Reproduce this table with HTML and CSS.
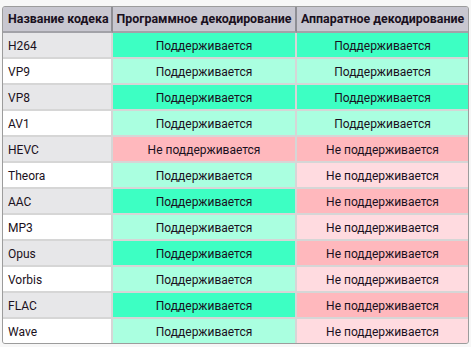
FILE: index.html
```html
<!DOCTYPE html>
<html lang="ru">
<head>
<meta charset="utf-8">
<link rel="stylesheet" href="styles.css">
</head>
<body>
<div class="frame">
<table class="codecs">
  <thead>
    <tr>
      <th class="name">Название кодека</th>
      <th class="c2">Программное декодирование</th>
      <th class="c3">Аппаратное декодирование</th>
    </tr>
  </thead>
  <tbody>
    <tr class="odd"><td class="name">H264</td><td class="yes">Поддерживается</td><td class="yes">Поддерживается</td></tr>
    <tr class="even"><td class="name">VP9</td><td class="yes">Поддерживается</td><td class="yes">Поддерживается</td></tr>
    <tr class="odd"><td class="name">VP8</td><td class="yes">Поддерживается</td><td class="yes">Поддерживается</td></tr>
    <tr class="even"><td class="name">AV1</td><td class="yes">Поддерживается</td><td class="yes">Поддерживается</td></tr>
    <tr class="odd"><td class="name">HEVC</td><td class="no">Не поддерживается</td><td class="no">Не поддерживается</td></tr>
    <tr class="even"><td class="name">Theora</td><td class="yes">Поддерживается</td><td class="no">Не поддерживается</td></tr>
    <tr class="odd"><td class="name">AAC</td><td class="yes">Поддерживается</td><td class="no">Не поддерживается</td></tr>
    <tr class="even"><td class="name">MP3</td><td class="yes">Поддерживается</td><td class="no">Не поддерживается</td></tr>
    <tr class="odd"><td class="name">Opus</td><td class="yes">Поддерживается</td><td class="no">Не поддерживается</td></tr>
    <tr class="even"><td class="name">Vorbis</td><td class="yes">Поддерживается</td><td class="no">Не поддерживается</td></tr>
    <tr class="odd"><td class="name">FLAC</td><td class="yes">Поддерживается</td><td class="no">Не поддерживается</td></tr>
    <tr class="even"><td class="name">Wave</td><td class="yes">Поддерживается</td><td class="no">Не поддерживается</td></tr>
  </tbody>
</table>
</div>
</body>
</html>
```

FILE: styles.css
```css
html, body {
  margin: 0;
  background: #f7f7f7;
}
body {
  padding: 6px 2px 0 2px;
  font-family: Roboto, "Noto Sans", sans-serif;
  font-size: 12px;
  color: #1a1020;
}
.frame {
  width: 465px;
  border: 1px solid #9c9c9c;
  border-radius: 3px;
  background: #d6d6d6;
  overflow: hidden;
}
.codecs {
  width: 100%;
  border-collapse: separate;
  border-spacing: 0;
  table-layout: fixed;
}
.codecs th, .codecs td {
  padding: 0;
  box-sizing: border-box;
  text-align: center;
  white-space: nowrap;
  line-height: 22px;
}
.codecs th {
  background: #c8c7d0;
  font-weight: bold;
  font-size: 12.4px;
  border-right: 2px solid #8e8e94;
  border-bottom: 2px solid #a2a2a8;
  height: 26px;
}
.codecs td {
  border-right: 2px solid #d6d6d6;
  border-bottom: 2px solid #d6d6d6;
  height: 26px;
  padding-top: 1px;
}
.codecs th:last-child, .codecs td:last-child {
  border-right: none;
}
.codecs tbody tr:last-child td {
  border-bottom: none;
  height: 24px;
}
.codecs .name {
  text-align: left;
  padding-left: 5px;
  width: 110px;
}
.codecs .c2 { width: 184px; }
.odd .name { background: #e7e7e9; }
.even .name { background: #ffffff; }
.odd .yes { background: #3dffc3; }
.even .yes { background: #aaffe0; }
.odd .no { background: #ffb8bd; }
.even .no { background: #ffdbe0; }
```
